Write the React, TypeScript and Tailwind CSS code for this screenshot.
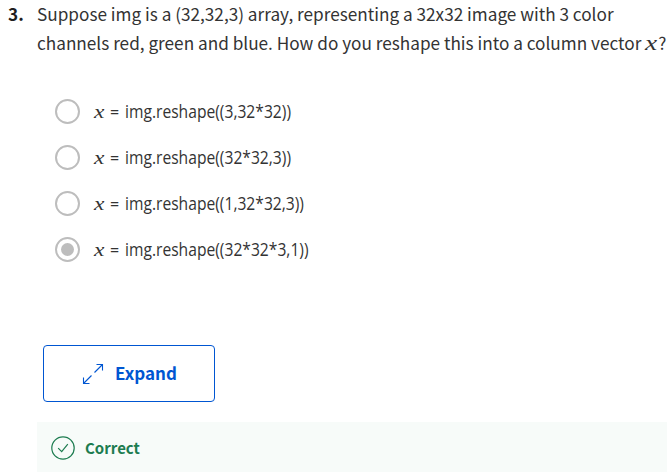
const options = ['(3,32*32))', '(32*32,3))', '(1,32*32,3))', '(32*32*3,1))'];

function MathX({ className }: { className: string }) {
  return (
    <i className={`inline-block ${className}`}>
      <span className='inline-block origin-left scale-x-[1.3] font-["Liberation_Serif",serif]'>x</span>
    </i>
  );
}

export default function App() {
  return (
    <main className='h-[472px] w-[670px] overflow-hidden bg-white font-["Noto_Sans_CJK_SC",sans-serif] text-[#333333]'>
      <section className="-mt-px flex h-[59px] pl-2 text-[17.2px] leading-[29px]">
        <b className="w-[29px] shrink-0 text-[#1f1f1f]">3.</b>
        <div className="whitespace-nowrap">
          <p>Suppose img is a (32,32,3) array, representing a 32x32 image with 3 color</p>
          <p>channels red, green and blue. How do you reshape this into a column vector <MathX className="w-[13px] text-[21px] leading-none" />?</p>
        </div>
      </section>
      <div className="mt-[31px] ml-[55px] flex flex-col">
        {options.map((o, i) => (
          <label key={o} className="flex h-[46px] items-center">
            <span className="mr-[14px] mb-0.5 flex size-[25px] shrink-0 items-center justify-center rounded-full border-[2.5px] border-[#bdbdbd]">
              {i === 3 && <span className="size-[13px] rounded-full bg-[#bdbdbd]" />}
            </span>
            <span className='-mt-px flex items-baseline font-["Open_Sans",sans-serif] text-[17.5px] leading-6'>
              <MathX className="w-[16px] text-[18px] leading-5" />
              <span className="w-[15px] text-[16px]">=</span>
              <span className="inline-block origin-left scale-x-[0.893]">img.reshape({o}</span>
            </span>
          </label>
        ))}
      </div>
      <button className="mt-[72px] ml-[43px] flex h-[57px] w-[172px] items-center rounded border border-[#0056d2] pl-[38px] text-[17px] text-[#0056d2]">
        <svg width="24" height="24" viewBox="0 0 24 24" fill="none" stroke="currentColor" strokeWidth="1.1" className="mr-[9px]">
          <path d="M12.5 10.5 20.5 2.5M14.5 2.5h6v6M9.5 13.5 1.5 21.5M1.5 15.5v6h6" />
        </svg>
        <b className="-mt-0.5">Expand</b>
      </button>
      <div className="mt-5 ml-[37px] flex h-[50px] w-[630px] items-center bg-[#f7fbf9] pt-0.5 pl-[14px] text-[15px] text-[#1d7c50]">
        <svg width="24" height="24" viewBox="0 0 24 24" fill="none" stroke="currentColor" strokeWidth="1.2" className="mr-[10px]">
          <circle cx="12" cy="12" r="11.2" />
          <path d="m7.2 12.2 3.5 3.5 6.1-7.5" />
        </svg>
        <b>Correct</b>
      </div>
    </main>
  );
}
